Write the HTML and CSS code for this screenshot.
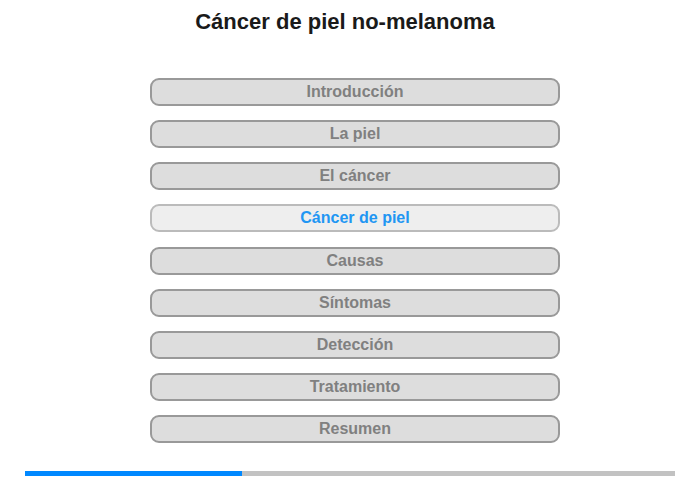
FILE: index.html
```html
<!DOCTYPE html>
<html lang="es">
<head>
<meta charset="utf-8">
<title>Cáncer de piel no-melanoma</title>
<link rel="stylesheet" href="styles.css">
</head>
<body>
<div class="page">
  <h1 class="title">Cáncer de piel no-melanoma</h1>
  <nav class="menu">
    <div class="item">Introducción</div>
    <div class="item">La piel</div>
    <div class="item">El cáncer</div>
    <div class="item active">Cáncer de piel</div>
    <div class="item">Causas</div>
    <div class="item">Síntomas</div>
    <div class="item">Detección</div>
    <div class="item">Tratamiento</div>
    <div class="item">Resumen</div>
  </nav>
  <div class="progress"><div class="fill" style="width:217px"></div></div>
</div>
</body>
</html>
```
FILE: styles.css
```css
html, body {
  margin: 0;
  padding: 0;
  background: #ffffff;
}
.page {
  width: 700px;
  height: 480px;
  font-family: "Liberation Sans", Arial, sans-serif;
  display: flex;
  flex-direction: column;
}
.title {
  margin: 9px 0 0 0;
  height: 26px;
  line-height: 26px;
  font-size: 22px;
  font-weight: bold;
  color: #1a1a1a;
  text-align: center;
  padding-right: 10px;
}
.menu {
  margin: 43px 0 0 150px;
  width: 410px;
  display: flex;
  flex-direction: column;
  gap: 14.125px;
}
.item {
  box-sizing: border-box;
  height: 28px;
  border: 2px solid #999999;
  border-radius: 9px;
  background: #dddddd;
  color: #808080;
  font-size: 16px;
  font-weight: bold;
  line-height: 24px;
  text-align: center;
}
.item.active {
  background: #eeeeee;
  border-color: #bbbbbb;
  color: #2196f3;
}
.progress {
  margin: 28px 0 0 25px;
  width: 650px;
  height: 5px;
  background: #c2c2c2;
  display: flex;
}
.fill {
  height: 5px;
  background: #0088ff;
}
```
